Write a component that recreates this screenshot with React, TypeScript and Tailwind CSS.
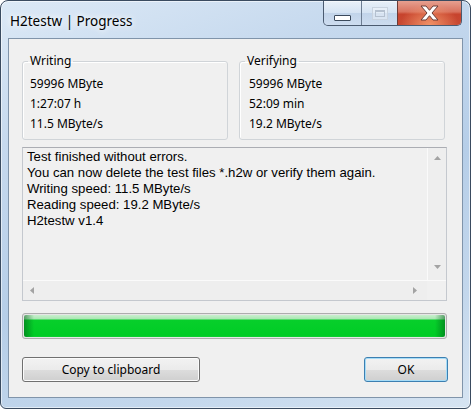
import React from 'react';

const ui = "font-['Noto_Sans',sans-serif]";
const mono = "font-['Liberation_Sans',Arial,sans-serif]";

function Arrow({ dir }: { dir: 'up' | 'down' | 'left' | 'right' }) {
  const vertical = dir === 'up' || dir === 'down';
  const points = {
    up: '0,4 3.5,0 7,4',
    down: '0,0 3.5,4 7,0',
    left: '4,0 0,3.5 4,7',
    right: '0,0 4,3.5 0,7',
  }[dir];
  return (
    <svg width={vertical ? 7 : 4} height={vertical ? 4 : 7} viewBox={vertical ? '0 0 7 4' : '0 0 4 7'}>
      <polygon points={points} fill="#a3a3a3" />
    </svg>
  );
}

function TitleBar() {
  return (
    <div className="flex h-[37px] shrink-0 items-start">
      <div className={`${ui} pl-[9px] pt-[11px] text-[13.5px] leading-[18px] text-black [text-shadow:0_0_6px_#fff,0_0_10px_#fff]`}>
        H2testw | Progress
      </div>
      <div className="ml-auto mr-[8px] flex h-[25px] overflow-hidden rounded-b-[5px] border border-t-0 border-[#4b5b70]">
        <div className="flex w-[37px] items-end justify-center bg-[linear-gradient(180deg,rgba(255,255,255,0.6)_0%,rgba(226,236,247,0.55)_48%,rgba(190,208,230,0.55)_52%,rgba(208,222,240,0.7)_100%)] pb-[4px]">
          <div className="h-[6px] w-[17px] rounded-[1px] border border-[#3b4a5c] bg-white" />
        </div>
        <div className="flex w-[36px] items-center justify-center border-l border-[#6d7d92] bg-[linear-gradient(180deg,rgba(255,255,255,0.6)_0%,rgba(226,236,247,0.55)_48%,rgba(190,208,230,0.55)_52%,rgba(208,222,240,0.7)_100%)]">
          <div className="flex h-[13px] w-[16px] items-center justify-center border border-[#c9d3df] bg-[rgba(255,255,255,0.35)]">
            <div className="h-[7px] w-[10px] border border-[#b4c0cf] border-t-2" />
          </div>
        </div>
        <div className="flex w-[64px] items-start justify-center border-l border-[#6b3a35] bg-[radial-gradient(ellipse_at_50%_100%,rgba(255,170,120,0.75),transparent_65%),linear-gradient(180deg,#e6a090_0%,#d8725e_45%,#c7432d_55%,#c84a33_100%)] pt-[4px]">
          <svg width="19" height="16" viewBox="-1 -1 19 16">
            <polygon
              points="0,0 5,0 8.5,4.3 12,0 17,0 11,7 17,14 12,14 8.5,9.7 5,14 0,14 6,7"
              fill="#fff"
              stroke="#6a3b35"
              strokeWidth="1"
              strokeLinejoin="round"
            />
          </svg>
        </div>
      </div>
    </div>
  );
}

function Group({ label, lines, inset }: { label: string; lines: string[]; inset: string }) {
  return (
    <fieldset className="w-[206px] rounded-[3px] border border-[#d0d4d8] pb-[5px] pl-[5px] shadow-[inset_1px_1px_0_#fff]">
      <legend className={`${ui} px-[2px] text-[12px] leading-[16px] text-black`}>{label}</legend>
      <div className={`${ui} ${inset} pt-[5px] text-[12px] leading-[20px] text-black`}>
        {lines.map((l) => (
          <div key={l}>{l}</div>
        ))}
      </div>
    </fieldset>
  );
}

function WinButton({ children, def }: { children: React.ReactNode; def?: boolean }) {
  return (
    <button
      className={`${ui} h-[25px] rounded-[3px] border bg-[linear-gradient(180deg,#f2f2f2_0%,#ebebeb_50%,#dddddd_50%,#cfcfcf_100%)] text-[12px] leading-[16px] text-black ${
        def
          ? 'w-[84px] border-[#3c7fb1] shadow-[inset_0_0_0_1px_#a6dcf7]'
          : 'w-[178px] border-[#707070] shadow-[inset_0_0_0_1px_#fbfbfb]'
      }`}
    >
      {children}
    </button>
  );
}

export default function App() {
  const log = [
    'Test finished without errors.',
    'You can now delete the test files *.h2w or verify them again.',
    'Writing speed: 11.5 MByte/s',
    'Reading speed: 19.2 MByte/s',
    'H2testw v1.4',
  ];

  return (
    <div className="h-[409px] w-[471px] bg-white">
      <div className="flex h-full flex-col overflow-hidden rounded-t-[8px] rounded-b-[6px] border border-[#3a4b60] bg-[linear-gradient(160deg,#dce9f6_0%,#c6d9ee_25%,#b6cee8_55%,#c3d7ec_80%,#d6e4f2_100%)] shadow-[inset_0_0_0_1px_rgba(255,255,255,0.55)]">
        <TitleBar />

        <div className="mx-[7px] flex h-[360px] shrink-0 flex-col border border-[#8094aa] bg-[#f0f0f0] pl-[13px] pr-[14px]">
          <div className="mt-[14px] flex gap-[11px]">
            <Group label="Writing" lines={['59996 MByte', '1:27:07 h', '11.5 MByte/s']} inset="pl-[2px]" />
            <Group label="Verifying" lines={['59996 MByte', '52:09 min', '19.2 MByte/s']} inset="pl-[4px]" />
          </div>

          <div className="mt-[7px] flex h-[154px] w-[425px] flex-col border border-[#c4c8ce] border-t-[#abadb3] bg-[#f0f0f0]">
            <div className="flex min-h-0 flex-1">
              <div className={`${mono} flex-1 pl-[4px] pt-[1px] text-[13.2px] leading-[16px] text-black`}>
                {log.map((l) => (
                  <div key={l} className="whitespace-nowrap">
                    {l}
                  </div>
                ))}
              </div>
              <div className="flex w-[19px] flex-col items-center justify-between border-l border-[#fafafa] bg-[#eeeeee] pb-[11px] pt-[8px]">
                <Arrow dir="up" />
                <Arrow dir="down" />
              </div>
            </div>
            <div className="flex h-[20px] border-t border-[#fafafa]">
              <div className="flex flex-1 items-center justify-between bg-[#eeeeee] pl-[7px] pr-[10px]">
                <Arrow dir="left" />
                <Arrow dir="right" />
              </div>
              <div className="w-[19px] bg-[#f0f0f0]" />
            </div>
          </div>

          <div className="mt-[12px] h-[26px] w-[425px] rounded-[3px] border border-[#adadad] bg-[#e6e6e6] p-px">
            <div className="h-full w-full rounded-[2px] bg-[linear-gradient(90deg,rgba(0,95,25,0.55)_0px,rgba(0,95,25,0)_10px),linear-gradient(270deg,rgba(0,95,25,0.55)_0px,rgba(0,95,25,0)_10px),linear-gradient(180deg,#c9efce_0px,#a9e6b2_4px,#07cf2b_5px,#00cc25_21px,#3fd95b_24px)]" />
          </div>

          <div className="mt-[18px] flex justify-between">
            <WinButton>Copy to clipboard</WinButton>
            <WinButton def>OK</WinButton>
          </div>
        </div>
      </div>
    </div>
  );
}
